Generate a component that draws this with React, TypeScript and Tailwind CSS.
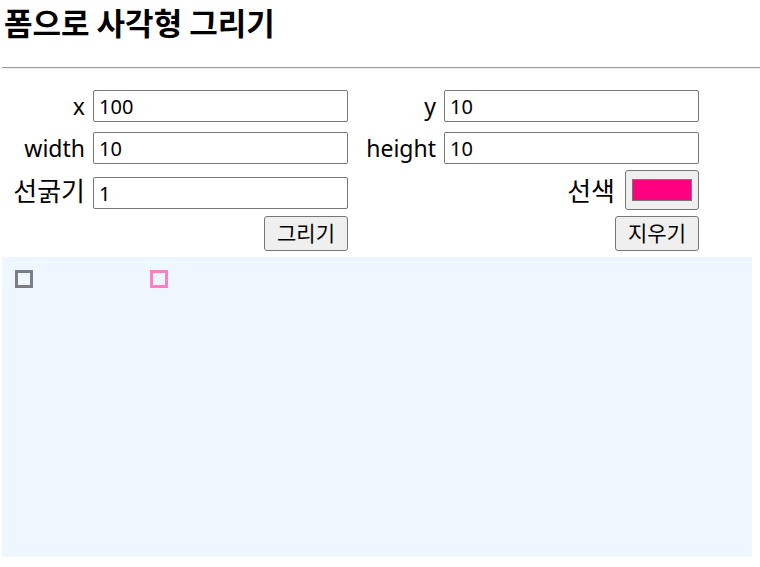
import React from "react";

const font = { fontFamily: '"Noto Sans", "Noto Sans CJK KR", sans-serif' };

function Field({ value }: { value: string }) {
  return (
    <input
      readOnly
      value={value}
      className="w-[255px] h-[32px] border border-[#767676] rounded-[2px] bg-white pl-[5px] text-[20px] text-black outline-none"
    />
  );
}

function Label({ children }: { children: React.ReactNode }) {
  return <div className="flex justify-end items-center pr-[4px] text-[23px] text-black leading-none">{children}</div>;
}

export default function App() {
  return (
    <div className="w-[760px] h-[567px] bg-white px-[2px] text-black" style={font}>
      <div className="h-[67px] pt-[2px]">
        <h1 className="text-[31px] font-bold leading-[40px] pl-[2px]" style={{ fontFamily: '"Noto Sans CJK KR", sans-serif' }}>폼으로 사각형 그리기</h1>
      </div>
      <div className="h-[2px] border-t border-[#9a9a9a] border-b border-b-[#eeeeee] mr-[-2px]" />
      <div className="pt-[21px]">
        <div className="grid grid-cols-[87px_255px_88px_255px] gap-x-[4px] h-[32px]">
          <Label>x</Label>
          <Field value="100" />
          <Label>y</Label>
          <Field value="10" />
        </div>
        <div className="grid grid-cols-[87px_255px_88px_255px] gap-x-[4px] h-[32px] mt-[10px]">
          <Label>width</Label>
          <Field value="10" />
          <Label>height</Label>
          <Field value="10" />
        </div>
        <div className="grid grid-cols-[87px_255px_88px_255px] gap-x-[4px] h-[40px] mt-[6px]">
          <div className="flex justify-end items-center pr-[4px] text-[26px] leading-none" style={{ fontFamily: '"Noto Sans CJK KR", sans-serif' }}>선굵기</div>
          <div className="pt-[7px]">
            <Field value="1" />
          </div>
          <div />
          <div className="flex justify-end items-center gap-[10px]">
            <span className="text-[26px] leading-none" style={{ fontFamily: '"Noto Sans CJK KR", sans-serif' }}>선색</span>
            <button className="w-[74px] h-[40px] bg-[#efefef] border border-[#767676] rounded-[3px] flex items-center justify-center">
              <span className="block w-[60px] h-[22px] bg-[#ff0080] border border-[#777777]" />
            </button>
          </div>
        </div>
        <div className="grid grid-cols-[87px_255px_88px_255px] gap-x-[4px] h-[35px] mt-[6px]">
          <div />
          <div className="flex justify-end">
            <button className="w-[84px] h-[35px] bg-[#efefef] border border-[#767676] rounded-[3px] text-[21px] leading-none">그리기</button>
          </div>
          <div />
          <div className="flex justify-end">
            <button className="w-[84px] h-[35px] bg-[#efefef] border border-[#767676] rounded-[3px] text-[21px] leading-none">지우기</button>
          </div>
        </div>
      </div>
      <div className="mt-[6px] w-[750px] h-[300px] bg-[#eef6ff]">
        <svg width="750" height="300" viewBox="0 0 750 300">
          <rect x="14.5" y="14.5" width="15" height="15" fill="none" stroke="#7b7e82" strokeWidth="3" />
          <rect x="149.5" y="14.5" width="15" height="15" fill="none" stroke="#ff7fc0" strokeWidth="3" />
        </svg>
      </div>
    </div>
  );
}
